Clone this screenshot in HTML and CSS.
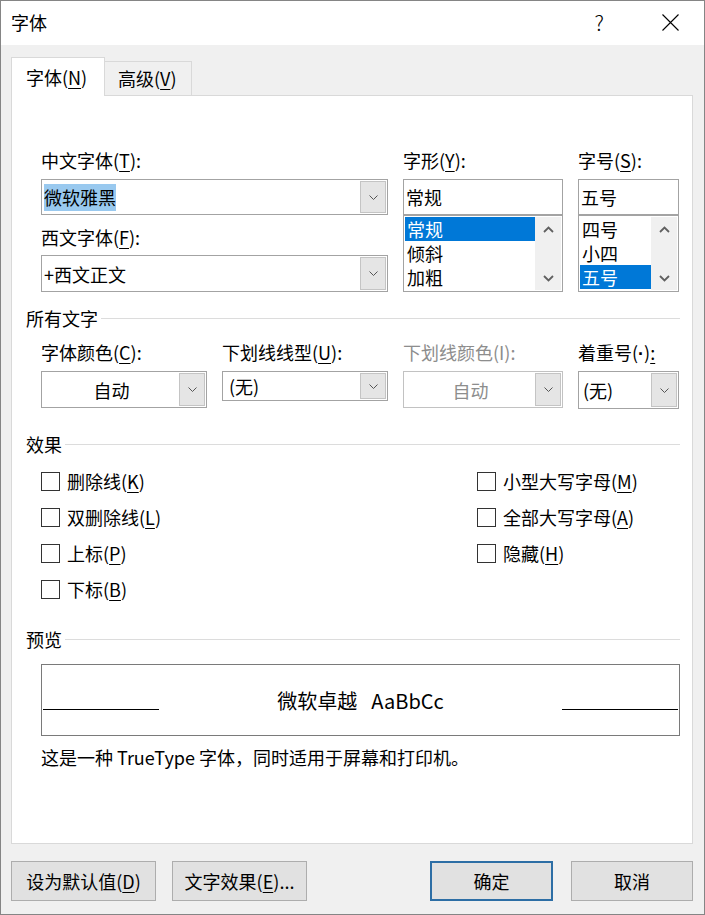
FILE: index.html
```html
<!DOCTYPE html>
<html lang="zh-CN">
<head>
<meta charset="utf-8">
<title>字体</title>
<link rel="stylesheet" href="styles.css">
</head>
<body>
<div class="window">
  <div class="titlebar">
    <span class="title">字体</span>
    <span class="help">?</span>
    <svg class="close" width="17" height="17" viewBox="0 0 17 17"><path d="M0.5 0.5L16.5 16.5M16.5 0.5L0.5 16.5" stroke="#000" stroke-width="1.1" fill="none"/></svg>
  </div>
  <div class="tabs">
    <div class="tab active">字体(<u>N</u>)</div>
    <div class="tab">高级(<u>V</u>)</div>
  </div>
  <div class="panel">
    <div class="fontgrid">
      <div class="col">
        <div class="label">中文字体(<u>T</u>):</div>
        <div class="combo h36">
          <span class="val"><span class="sel">微软雅黑</span></span>
          <span class="dd"><svg width="9" height="5" viewBox="0 0 9 5"><path d="M0.5 0.5L4.5 4.5L8.5 0.5" stroke="#555" fill="none"/></svg></span>
        </div>
        <div class="label second">西文字体(<u>F</u>):</div>
        <div class="combo h37">
          <span class="val">+西文正文</span>
          <span class="dd"><svg width="9" height="5" viewBox="0 0 9 5"><path d="M0.5 0.5L4.5 4.5L8.5 0.5" stroke="#555" fill="none"/></svg></span>
        </div>
      </div>
      <div class="col">
        <div class="label">字形(<u>Y</u>):</div>
        <div class="textbox">常规</div>
        <div class="list">
          <div class="items">
            <div class="item on">常规</div>
            <div class="item">倾斜</div>
            <div class="item">加粗</div>
          </div>
          <div class="sbar">
            <span class="arr"><svg width="11" height="7" viewBox="0 0 11 7"><path d="M1 6L5.5 1.5L10 6" stroke="#606060" stroke-width="1.8" fill="none"/></svg></span>
            <span class="arr"><svg width="11" height="7" viewBox="0 0 11 7"><path d="M1 1L5.5 5.5L10 1" stroke="#606060" stroke-width="1.8" fill="none"/></svg></span>
          </div>
        </div>
      </div>
      <div class="col">
        <div class="label">字号(<u>S</u>):</div>
        <div class="textbox">五号</div>
        <div class="list">
          <div class="items">
            <div class="item">四号</div>
            <div class="item">小四</div>
            <div class="item on">五号</div>
          </div>
          <div class="sbar">
            <span class="arr"><svg width="11" height="7" viewBox="0 0 11 7"><path d="M1 6L5.5 1.5L10 6" stroke="#606060" stroke-width="1.8" fill="none"/></svg></span>
            <span class="arr"><svg width="11" height="7" viewBox="0 0 11 7"><path d="M1 1L5.5 5.5L10 1" stroke="#606060" stroke-width="1.8" fill="none"/></svg></span>
          </div>
        </div>
      </div>
    </div>

    <div class="sec sec-all"><span>所有文字</span></div>
    <div class="row2">
      <div class="col">
        <div class="label">字体颜色(<u>C</u>):</div>
        <div class="combo h37">
          <span class="val center">自动</span>
          <span class="dd"><svg width="9" height="5" viewBox="0 0 9 5"><path d="M0.5 0.5L4.5 4.5L8.5 0.5" stroke="#555" fill="none"/></svg></span>
        </div>
      </div>
      <div class="col">
        <div class="label">下划线线型(<u>U</u>):</div>
        <div class="combo h30">
          <span class="val pad">(无)</span>
          <span class="dd"><svg width="9" height="5" viewBox="0 0 9 5"><path d="M0.5 0.5L4.5 4.5L8.5 0.5" stroke="#555" fill="none"/></svg></span>
        </div>
      </div>
      <div class="col">
        <div class="label disabled">下划线颜色(I):</div>
        <div class="combo h37 off">
          <span class="val center">自动</span>
          <span class="dd"><svg width="9" height="5" viewBox="0 0 9 5"><path d="M0.5 0.5L4.5 4.5L8.5 0.5" stroke="#555" fill="none"/></svg></span>
        </div>
      </div>
      <div class="col">
        <div class="label">着重号(<span class="dot">·</span>)<u>:</u></div>
        <div class="combo h38">
          <span class="val pad4">(无)</span>
          <span class="dd"><svg width="9" height="5" viewBox="0 0 9 5"><path d="M0.5 0.5L4.5 4.5L8.5 0.5" stroke="#555" fill="none"/></svg></span>
        </div>
      </div>
    </div>

    <div class="sec sec-fx"><span>效果</span></div>
    <div class="effects">
      <div class="fxcol">
        <div class="chk"><span class="cb"></span>删除线(<u>K</u>)</div>
        <div class="chk"><span class="cb"></span>双删除线(<u>L</u>)</div>
        <div class="chk"><span class="cb"></span>上标(<u>P</u>)</div>
        <div class="chk"><span class="cb"></span>下标(<u>B</u>)</div>
      </div>
      <div class="fxcol">
        <div class="chk"><span class="cb"></span>小型大写字母(<u>M</u>)</div>
        <div class="chk"><span class="cb"></span>全部大写字母(<u>A</u>)</div>
        <div class="chk"><span class="cb"></span>隐藏(<u>H</u>)</div>
      </div>
    </div>

    <div class="sec sec-pv"><span>预览</span></div>
    <div class="preview">
      <span class="pline"></span>
      <span class="ptext">微软卓越<span class="latin">AaBbCc</span></span>
      <span class="pline"></span>
    </div>
    <div class="desc">这是一种 TrueType 字体，同时适用于屏幕和打印机。</div>
  </div>
  <div class="buttons">
    <div class="btn b1">设为默认值(<u>D</u>)</div>
    <div class="btn b2">文字效果(<u>E</u>)...</div>
    <div class="spacer"></div>
    <div class="btn b3 default">确定</div>
    <div class="btn b4">取消</div>
  </div>
</div>
</body>
</html>
```
FILE: styles.css
```css
* { box-sizing: border-box; }
html, body { margin: 0; padding: 0; }
body {
  font-family: "Noto Sans CJK SC", "Microsoft YaHei", sans-serif;
  font-size: 18px;
  color: #000;
  background: #fff;
}
u {
  text-decoration: underline;
  text-decoration-thickness: 1px;
  text-underline-offset: 3px;
}
.window {
  width: 705px;
  height: 915px;
  border: 1px solid #858585;
  background: #f0f0f0;
  display: flex;
  flex-direction: column;
}
.titlebar {
  flex: none;
  height: 44px;
  background: #fff;
  display: flex;
  align-items: center;
  padding: 0 25px 2px 10px;
}
.title { line-height: 24px; }
.help {
  margin-left: auto;
  margin-right: 58px;
  font-size: 21px;
  font-weight: 300;
  line-height: 24px;
}
.close { display: block; }

.tabs {
  flex: none;
  height: 51px;
  margin-bottom: -1px;
  padding: 12px 0 0 10px;
  display: flex;
  align-items: flex-start;
  position: relative;
  z-index: 1;
}
.tab {
  height: 34px;
  margin-top: 4px;
  width: 87px;
  padding-left: 13px;
  line-height: 32px;
  border: 1px solid #d9d9d9;
  border-left: none;
  border-bottom: none;
  background: #f0f0f0;
  white-space: nowrap;
}
.tab.active {
  height: 39px;
  margin-top: 0;
  width: 94px;
  padding-left: 14px;
  line-height: 38px;
  border-left: 1px solid #d9d9d9;
  background: #fff;
}

.panel {
  flex: none;
  height: 749px;
  margin: 0 11px 0 10px;
  background: #fff;
  border: 1px solid #d9d9d9;
  padding: 52px 12px 0 14px;
}

.fontgrid {
  display: grid;
  grid-template-columns: 347px 160px 101px;
  column-gap: 15px;
  margin-left: 15px;
}
.col { display: flex; flex-direction: column; }
.label {
  height: 24px;
  line-height: 24px;
  white-space: nowrap;
  margin-bottom: 7px;
}
.label.second { margin-top: 10px; margin-bottom: 6px; }
.label.disabled { color: #8d8d8d; }
.dot { font-family: "Liberation Sans", sans-serif; font-weight: bold; }

.combo {
  display: flex;
  border: 1px solid #a3a3a3;
  padding: 1px;
  background: #fff;
}
.combo.h30 { height: 30px; }
.combo.h36 { height: 36px; }
.combo.h37 { height: 37px; }
.combo.h38 { height: 38px; }
.combo.off { border-color: #c2c2c2; color: #8d8d8d; }
.val {
  flex: 1;
  display: flex;
  align-items: center;
  padding-left: 1px;
  white-space: nowrap;
}
.val.center { justify-content: center; }
.val.pad { padding-left: 5px; }
.val.pad4 { padding-left: 3px; }
.sel {
  background: #99c9ef;
  line-height: 27px;
  height: 27px;
  display: inline-block;
}
.dd {
  flex: none;
  width: 26px;
  background: #e5e5e5;
  border: 1px solid #c4c4c4;
  display: flex;
  align-items: center;
  justify-content: center;
}
.dd svg { display: block; }

.textbox {
  height: 36px;
  border: 1px solid #a3a3a3;
  padding-left: 2px;
  display: flex;
  align-items: center;
}
.list {
  height: 77px;
  border: 1px solid #a3a3a3;
  padding: 1px;
  display: flex;
}
.items { flex: 1; }
.item {
  height: 24px;
  line-height: 24px;
  padding-left: 2px;
}
.item.on { background: #0078d7; color: #fff; }
.sbar {
  flex: none;
  width: 26px;
  background: #f0f0f0;
  display: flex;
  flex-direction: column;
  justify-content: space-between;
}
.arr {
  height: 24px;
  display: flex;
  align-items: center;
  justify-content: center;
}
.arr svg { display: block; }

.sec {
  display: flex;
  align-items: center;
  height: 24px;
  line-height: 24px;
}
.sec::after {
  content: "";
  flex: 1;
  height: 1px;
  background: #dcdcdc;
  margin-left: 3px;
}
.sec-all { margin-top: 14px; }
.sec-fx { margin-top: 23px; }
.sec-pv { margin-top: 20px; }

.row2 {
  display: grid;
  grid-template-columns: 166px 166px 160px 101px;
  column-gap: 15px;
  align-items: start;
  margin-left: 15px;
  margin-top: 10px;
}
.row2 .label { margin-bottom: 7px; }

.effects {
  display: grid;
  grid-template-columns: 436px 1fr;
  margin-left: 15px;
  margin-top: 7px;
}
.chk {
  height: 36px;
  display: flex;
  align-items: center;
  white-space: nowrap;
}
.cb {
  width: 19px;
  height: 19px;
  border: 1px solid #333;
  background: #fff;
  margin-right: 7px;
  flex: none;
}

.preview {
  margin: 13px 0 0 15px;
  height: 72px;
  border: 1px solid #7a7a7a;
  padding: 0 1px;
  display: grid;
  grid-template-columns: 116px 1fr 116px;
  align-items: center;
}
.pline {
  height: 1px;
  background: #000;
  margin-top: 18px;
}
.ptext {
  text-align: center;
  font-size: 20px;
  line-height: 28px;
  margin-top: 2px;
  white-space: nowrap;
}
.latin { margin-left: 14px; }
.desc {
  margin: 9px 0 0 15px;
  height: 24px;
  line-height: 24px;
  white-space: nowrap;
}

.buttons {
  flex: none;
  display: flex;
  height: 40px;
  margin-top: 17px;
  padding: 0 11px 0 10px;
}
.spacer { flex: 1; }
.btn {
  height: 40px;
  background: #e1e1e1;
  border: 1px solid #adadad;
  display: flex;
  align-items: center;
  justify-content: center;
  white-space: nowrap;
}
.b1 { width: 145px; margin-right: 16px; }
.b2 { width: 135px; }
.b3 { width: 123px; margin-right: 18px; }
.b4 { width: 122px; }
.btn.default { border: 2px solid #2d6ea5; }
```
